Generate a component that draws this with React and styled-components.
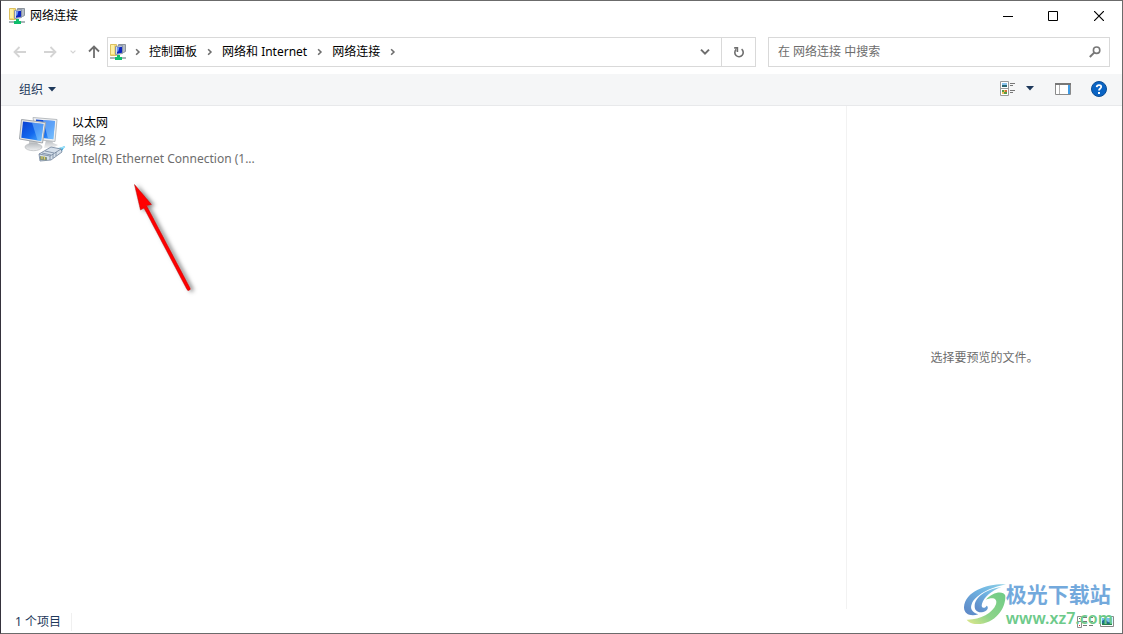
import React, { useState } from 'react';
import styled, { createGlobalStyle } from 'styled-components';

const GlobalStyle = createGlobalStyle`
  * {
    box-sizing: border-box;
  }

  body {
    margin: 0;
    background: #fff;
    color: #000;
    font-family: "Noto Sans", "Noto Sans CJK SC", sans-serif;
    font-size: 12px;
    line-height: 18px;
  }

  button, input {
    font: inherit;
  }

  svg {
    display: block;
    flex-shrink: 0;
  }
`;

const Window = styled.div`
  position: relative;
  display: flex;
  flex-direction: column;
  min-height: 100vh;
  background: #fff;
  border: 1px solid #6b6b6b;
  border-left-color: #35323c;
`;

const TitleBar = styled.header`
  display: flex;
  align-items: center;
  height: 29px;
  padding-left: 8px;
`;

const Title = styled.h1`
  flex: 1;
  margin: 0;
  padding-left: 5px;
  font-size: 12px;
  font-weight: normal;
`;

const PlainButton = styled.button`
  display: flex;
  align-items: center;
  justify-content: center;
  width: ${(props) => props.$width || 24}px;
  height: ${(props) => props.$height || 28}px;
  padding: 0;
  border: none;
  background: none;
  color: ${(props) => props.$color || '#000'};
`;

const AddressRow = styled.div`
  display: flex;
  align-items: center;
  height: 44px;
  padding: 0 12px 0 4px;
`;

const AddressBox = styled.div`
  display: flex;
  flex: 1;
  align-items: center;
  height: 30px;
  margin-right: 12px;
  padding-left: 2px;
  border: 1px solid #d9d9d9;
`;

const Breadcrumbs = styled.nav`
  display: flex;
  flex: 1;
  align-items: center;
`;

const Crumb = styled.a`
  color: #000;
  text-decoration: none;
`;

const CrumbArrow = styled.span`
  display: flex;
  justify-content: center;
  width: ${(props) => props.$width || 25}px;
  color: #6e6e6e;
`;

const RefreshCell = styled.div`
  display: flex;
  height: 28px;
  border-left: 1px solid #d9d9d9;
`;

const SearchBox = styled.form`
  display: flex;
  align-items: center;
  width: 342px;
  height: 30px;
  padding-left: 9px;
  border: 1px solid #d9d9d9;
`;

const SearchInput = styled.input`
  flex: 1;
  min-width: 0;
  padding: 0;
  border: none;
  outline: none;
  background: none;

  &::placeholder {
    color: #6d6d6d;
    opacity: 1;
  }
`;

const CommandBar = styled.div`
  display: flex;
  align-items: center;
  justify-content: space-between;
  height: 32px;
  padding: 0 10px 0 18px;
  background: #f5f6f7;
  border-bottom: 1px solid #e8e9eb;
`;

const OrganizeButton = styled.button`
  display: flex;
  align-items: center;
  gap: 5px;
  padding: 0;
  border: none;
  background: none;
  color: #1e395b;
`;

const CommandGroup = styled.div`
  display: flex;
  align-items: center;
  padding-bottom: 2px;
`;

const Content = styled.main`
  display: flex;
  flex: 1;
`;

const FileList = styled.ul`
  flex: 1;
  margin: 0;
  padding: 8px 0 0 17px;
  list-style: none;
`;

const Connection = styled.li`
  display: flex;
  gap: 6px;
`;

const ConnectionName = styled.div`
  color: #000;
`;

const ConnectionDetail = styled.div`
  color: #6d6d6d;
`;

const PreviewPane = styled.aside`
  display: flex;
  align-items: center;
  justify-content: center;
  width: 276px;
  border-left: 1px solid #f2f2f2;
  color: #6d6d6d;
`;

const StatusBar = styled.footer`
  display: flex;
  align-items: center;
  justify-content: space-between;
  height: 24px;
  padding: 2px 6px 0 14px;
`;

const ItemCount = styled.span`
  padding-right: 10px;
  border-right: 1px solid #f0f0f0;
  color: #1e395b;
`;

const ViewButtons = styled.div`
  display: flex;
  gap: 4px;
`;

const Pointer = styled.svg`
  position: absolute;
  top: 174px;
  left: 124px;
`;

const Watermark = styled.div`
  position: absolute;
  right: 9px;
  bottom: 4px;
  display: flex;
  pointer-events: none;
`;

const WatermarkName = styled.div`
  color: #73a9dc;
  font-family: "Liberation Sans", "Noto Sans CJK SC", sans-serif;
  font-size: 21px;
  font-weight: 700;
  line-height: 24px;
`;

const WatermarkSite = styled.div`
  color: #6dca8a;
  font-size: 16px;
  font-weight: 600;
  line-height: 22px;
`;

const NetworkIcon = () => (
  <svg width="16" height="16" viewBox="0 0 16 16">
    <path d="M0.5 0.5h6v11h-6z" fill="#f5dc74" stroke="#dcc060" />
    <path d="M1 1h3v9H1z" fill="#fdf0a4" />
    <path d="M8.5 0.5h7v7l-2 1h-5z" fill="#b4bcc6" stroke="#8d949c" />
    <path d="M5.5 2.5l7-1v8l-7 1z" fill="#d8dee8" stroke="#8994a5" />
    <path d="M7 3.5l5-.7v6l-5 1z" fill="#0c24c0" />
    <path d="M7 3.5l2.4-.3-1 4L7 8z" fill="#6c98f4" />
    <path d="M7 11h3v2h2v3H5v-3h2z" fill="#10bd6c" />
    <path d="M0 13h5v2H0zM12 13h4v2h-4z" fill="#aab4b8" />
  </svg>
);

const ArrowIcon = ({ turn = 0, size = 14 }) => (
  <svg width={size} height={size} viewBox="0 0 14 14" fill="none" stroke="currentColor" strokeWidth="1.8">
    <path d="M13 7H2M6.5 2L1.5 7l5 5" transform={`rotate(${turn} 7 7)`} />
  </svg>
);

const ChevronIcon = ({ down = false, size = 6 }) => (
  <svg width={size} height={size} viewBox="0 0 6 6" fill="none" stroke="currentColor" strokeWidth="1.2">
    <path d={down ? 'M0.6 1.6L3 4l2.4-2.4' : 'M1.6 0.9L3.7 3 1.6 5.1'} />
  </svg>
);

const CaretIcon = () => (
  <svg width="8" height="5" viewBox="0 0 8 5">
    <path d="M0 0h8L4 4.6z" fill="#1e395b" />
  </svg>
);

const RefreshIcon = () => (
  <svg width="12" height="13" viewBox="0 0 12 13" fill="none" stroke="#6e6e6e" strokeWidth="1.6">
    <path d="M8.6 3.2A4.2 4.2 0 1 1 3.2 3.4" />
    <path d="M1.2 1.9h3.2v4" />
  </svg>
);

const SearchIcon = () => (
  <svg width="12" height="12" viewBox="0 0 12 12" fill="none" stroke="#777">
    <circle cx="7.6" cy="4.2" r="3.2" strokeWidth="1.6" />
    <path d="M5.2 6.6L0.8 11" strokeWidth="2" />
  </svg>
);

const ViewIcon = () => (
  <svg width="16" height="15" viewBox="0 0 16 15">
    <path d="M0.5 0.5h8v14h-8zM0.5 7.5h8" fill="#fff" stroke="#9a9a9a" />
    <path d="M2 2h5v2H2z" fill="#8cc4ee" />
    <path d="M2 4h5v2H2z" fill="#2a6672" />
    <path d="M2 9h5v4H2z" fill="#edc05c" />
    <path d="M2 9h2v2H2zM4 11h3v2H4z" fill="#5b9d45" />
    <path d="M5 9h2v2H5z" fill="#d26b38" />
    <path d="M10 2.5h5M10 4.5h3M10 9.5h5M10 11.5h3" stroke="#777" />
  </svg>
);

const PaneIcon = () => (
  <svg width="16" height="12" viewBox="0 0 16 12">
    <path d="M0.5 0.5h15v11H0.5z" fill="#fff" stroke="#8a8a8a" />
    <path d="M0 1h16" stroke="#777" strokeWidth="2" />
    <path d="M4.5 2v9" stroke="#b0b0b0" />
    <path d="M13 2h2v9h-2z" fill="#3e9be6" />
  </svg>
);

const HelpIcon = () => (
  <svg width="16" height="16" viewBox="0 0 16 16">
    <circle cx="8" cy="8" r="7.5" fill="#0a64c4" stroke="#0b4d94" />
    <path d="M5.7 6.1C5.8 3.3 10.4 3.4 10.2 6 10.1 7.6 8 7.5 8 9.5" fill="none" stroke="#fff" strokeWidth="1.8" />
    <path d="M7 11h2v2H7z" fill="#fff" />
  </svg>
);

const EthernetIcon = () => (
  <svg width="48" height="48" viewBox="0 0 48 48">
    <defs>
      <linearGradient id="screen" x1="0" y1="0" x2="1" y2="1">
        <stop offset="0" stopColor="#0b3fd0" />
        <stop offset="0.55" stopColor="#1268ee" />
        <stop offset="1" stopColor="#54b4ff" />
      </linearGradient>
      <linearGradient id="stand" x1="0" y1="0" x2="0" y2="1">
        <stop offset="0" stopColor="#b8bcc0" />
        <stop offset="1" stopColor="#f0f1f2" />
      </linearGradient>
    </defs>
    <path d="M28 26h6l1 3 5 2-5 3h-9z" fill="url(#stand)" />
    <path d="M15 3.5l24 2-2 22-19-2z" fill="#eef0f2" stroke="#b9bdc1" />
    <path d="M18 5.5l19 1.4-1.7 18.4-17.3-2z" fill="url(#screen)" />
    <path d="M25 6l12 1-1.7 18.3-5.3-.7z" fill="#8fcaff" opacity="0.6" />
    <path d="M11 27h8l1 4H11z" fill="#c7cacd" />
    <ellipse cx="15.5" cy="33" rx="8.5" ry="3.7" fill="url(#stand)" stroke="#b6b9bc" strokeWidth="0.7" />
    <path d="M3.5 5.5l24 3-3 20.5L1.5 25z" fill="#e4e6e8" stroke="#a2a6ab" />
    <path d="M5 7.5l20.5 2.5-2.4 17L3.3 23.8z" fill="url(#screen)" />
    <path d="M14 8.6l11.5 1.4-2.4 17-3.5-.6z" fill="#8ac9ff" opacity="0.5" />
    <path d="M36 36l11-4-3 5-6 3z" fill="#35a9dc" />
    <path d="M39 35l8-2" stroke="#9be1fa" strokeWidth="1.5" />
    <path d="M21 40l12-7 10 2 1 3-11 8-11 1z" fill="#d5dfea" stroke="#71839a" strokeWidth="0.8" />
    <path d="M21 40l11 2 11-7M32 42v4M27 37l9 2M24 39l9 2M35 40v4M38 38v4" fill="none" stroke="#71839a" strokeWidth="0.8" />
    <path d="M22 42l7 1.3v3L22 46z" fill="#86957b" />
    <path d="M24 42v3M26.5 42.5v3" stroke="#e5d35d" />
  </svg>
);

const DetailsIcon = () => (
  <svg width="17" height="12" viewBox="0 0 17 12">
    <path d="M0.5 0.5h4v11h-4zM0.5 5.5h4" fill="none" stroke="#8d8d8d" />
    <path d="M2 2h1v1H2z" fill="#3c9a55" />
    <path d="M2 9h1v1H2z" fill="#dc3939" />
    <path d="M6 1.5h4M12 1.5h4M6 5.5h4M12 5.5h4M6 9.5h4M12 9.5h4" stroke="#777" />
  </svg>
);

const ThumbnailIcon = () => (
  <svg width="14" height="12" viewBox="0 0 14 12">
    <path d="M0.5 0.5h13v10H0.5z" fill="#fff" stroke="#888" />
    <path d="M2 2h10v7H2z" fill="#78c0ee" />
    <path d="M2 5l3-2 3 3 4 1v2H2z" fill="#246b92" />
    <path d="M2 7l4 1 6-1v2H2z" fill="#25824e" />
  </svg>
);

const SwirlLogo = () => (
  <svg width="44" height="42" viewBox="6 24 132 126">
    <defs>
      <linearGradient id="swirlBlue" x1="1" y1="0" x2="0" y2="1">
        <stop offset="0" stopColor="#8fd0e6" />
        <stop offset="0.4" stopColor="#6fb4e2" />
        <stop offset="1" stopColor="#5c84c4" />
      </linearGradient>
      <linearGradient id="swirlGreen" x1="1" y1="0" x2="0" y2="1">
        <stop offset="0" stopColor="#6fcb86" />
        <stop offset="0.6" stopColor="#8ed48a" />
        <stop offset="1" stopColor="#e2e88c" />
      </linearGradient>
    </defs>
    <path d="M138 28C90 25 15 45 12 97c0 23 23 28 43 21-20-6-25-18-20-30C45 60 90 38 138 28z" fill="url(#swirlBlue)" />
    <path d="M124 36C80 42 46 65 44 92c-1 18 16 25 34 15 8-5 6-13 2-15-8 12-18 6-14-6 6-20 28-38 58-50z" fill="url(#swirlBlue)" />
    <path d="M78 74c17-22 52-29 58-12 2 38-31 86-86 85-15 0-26-7-30-13 40 1 78-19 88-46 6-20-13-22-30-14z" fill="url(#swirlGreen)" />
  </svg>
);

const crumbs = ['控制面板', '网络和 Internet', '网络连接'];

const App = () => {
  const [query, setQuery] = useState('');

  return (
    <>
      <GlobalStyle />
      <Window>
        <TitleBar>
          <NetworkIcon />
          <Title>网络连接</Title>
          <PlainButton $width={44} aria-label="最小化">
            <svg width="10" height="10"><path d="M0 5.5h10" stroke="#000" /></svg>
          </PlainButton>
          <PlainButton $width={46} aria-label="最大化">
            <svg width="10" height="10"><path d="M0.5 0.5h9v9h-9z" fill="none" stroke="#000" /></svg>
          </PlainButton>
          <PlainButton $width={46} aria-label="关闭">
            <svg width="10" height="10"><path d="M0 0l10 10M10 0L0 10" stroke="#000" strokeWidth="1.2" /></svg>
          </PlainButton>
        </TitleBar>

        <AddressRow>
          <PlainButton $width={30} $color="#d4d4d4" aria-label="后退">
            <ArrowIcon />
          </PlainButton>
          <PlainButton $width={30} $color="#d4d4d4" aria-label="前进">
            <ArrowIcon turn={180} />
          </PlainButton>
          <PlainButton $width={16} $color="#d4d4d4" aria-label="最近浏览的位置">
            <ChevronIcon down />
          </PlainButton>
          <PlainButton $width={26} $color="#6e6e6e" aria-label="上移">
            <ArrowIcon turn={90} />
          </PlainButton>
          <AddressBox>
            <NetworkIcon />
            <Breadcrumbs aria-label="地址">
              <CrumbArrow $width={23}>
                <ChevronIcon size={8} />
              </CrumbArrow>
              {crumbs.map((crumb) => (
                <React.Fragment key={crumb}>
                  <Crumb href="#">{crumb}</Crumb>
                  <CrumbArrow>
                    <ChevronIcon size={8} />
                  </CrumbArrow>
                </React.Fragment>
              ))}
            </Breadcrumbs>
            <PlainButton $width={33} $color="#6e6e6e" aria-label="以前的位置">
              <ChevronIcon down size={10} />
            </PlainButton>
            <RefreshCell>
              <PlainButton $width={33} aria-label="刷新">
                <RefreshIcon />
              </PlainButton>
            </RefreshCell>
          </AddressBox>
          <SearchBox onSubmit={(e) => e.preventDefault()}>
            <SearchInput
              type="text"
              aria-label="搜索"
              placeholder="在 网络连接 中搜索"
              value={query}
              onChange={(e) => setQuery(e.target.value)}
            />
            <PlainButton $width={28} type="submit" aria-label="开始搜索">
              <SearchIcon />
            </PlainButton>
          </SearchBox>
        </AddressRow>

        <CommandBar>
          <OrganizeButton>
            组织
            <CaretIcon />
          </OrganizeButton>
          <CommandGroup>
            <PlainButton aria-label="更改视图">
              <ViewIcon />
            </PlainButton>
            <PlainButton $width={20} aria-label="更多视图选项">
              <CaretIcon />
            </PlainButton>
            <PlainButton $width={46} aria-label="预览窗格">
              <PaneIcon />
            </PlainButton>
            <PlainButton $width={26} aria-label="帮助">
              <HelpIcon />
            </PlainButton>
          </CommandGroup>
        </CommandBar>

        <Content>
          <FileList>
            <Connection>
              <EthernetIcon />
              <div>
                <ConnectionName>以太网</ConnectionName>
                <ConnectionDetail>网络 2</ConnectionDetail>
                <ConnectionDetail>Intel(R) Ethernet Connection (1...</ConnectionDetail>
              </div>
            </Connection>
          </FileList>
          <PreviewPane>选择要预览的文件。</PreviewPane>
        </Content>

        <StatusBar>
          <ItemCount>1 个项目</ItemCount>
          <ViewButtons>
            <PlainButton $width={17} $height={14} aria-label="详细信息">
              <DetailsIcon />
            </PlainButton>
            <PlainButton $width={18} $height={14} aria-label="大缩略图">
              <ThumbnailIcon />
            </PlainButton>
          </ViewButtons>
        </StatusBar>

        <Pointer width="80" height="130" viewBox="0 0 80 130">
          <defs>
            <filter id="pointerShadow" x="-30%" y="-20%" width="170%" height="150%">
              <feDropShadow dx="3" dy="1" stdDeviation="2" floodColor="#000" floodOpacity="0.5" />
            </filter>
          </defs>
          <g filter="url(#pointerShadow)" stroke="#b01010" strokeWidth="0.5">
            <path d="M9.5 9.5L26.5 29.5l-5 1L65 113a1.6 1.6 0 0 1-3 1.5L19 33l-3.500 2z" fill="#ff0000" />
          </g>
        </Pointer>

        <Watermark>
          <SwirlLogo />
          <div>
            <WatermarkName>极光下载站</WatermarkName>
            <WatermarkSite>www.xz7.com</WatermarkSite>
          </div>
        </Watermark>
      </Window>
    </>
  );
};

export default App;
